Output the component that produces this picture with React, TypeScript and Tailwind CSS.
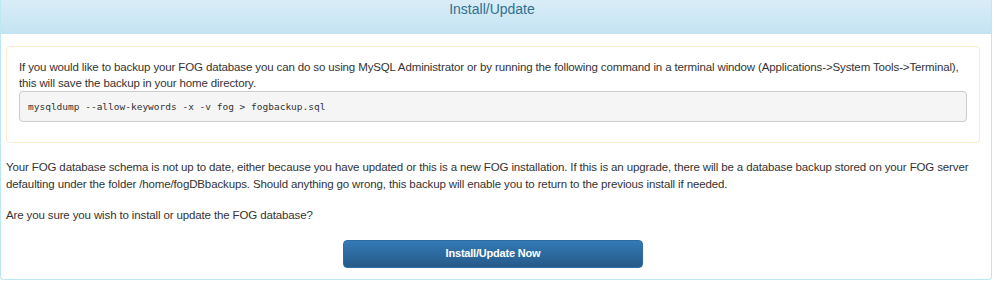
export default function App() {
  return (
    <div className="w-[999px] h-[289px] bg-white font-['Liberation_Sans',Arial,sans-serif] text-[#333]">
      <div className="w-[992px] h-[280px] border border-[#bce8f1] rounded-b-[4px] border-t-0 flex flex-col">
        <div className="h-[34px] bg-gradient-to-b from-[#d9edf7] to-[#c4e3f3] pl-[5px] pr-[13px]">
          <div className="w-full text-center text-[14px] leading-[18px] text-[#31708f]">Install/Update</div>
        </div>
        <div className="pl-[5px] pt-[12px] w-[979px]">
          <div className="border border-[#faebcc] rounded-[4px] pt-[12px] px-[12px] pb-[20px] text-[11.5px] tracking-[-0.13px] leading-[16px]">
            <p>
              If you would like to backup your FOG database you can do so using MySQL Administrator or by running the following command in a terminal window (Applications-&gt;System Tools-&gt;Terminal), this will save the backup in your home directory.
            </p>
            <pre className="mt-0 h-[31px] flex items-center px-[8px] bg-[#f5f5f5] border border-[#ccc] rounded-[4px] font-['DejaVu_Sans_Mono',monospace] text-[9.5px] tracking-normal text-[#333]">
              mysqldump --allow-keywords -x -v fog &gt; fogbackup.sql
            </pre>
          </div>
          <div className="mt-[16px] text-[11.5px] tracking-[-0.13px] leading-[16.5px]">
            <p>
              Your FOG database schema is not up to date, either because you have updated or this is a new FOG installation. If this is an upgrade, there will be a database backup stored on your FOG server defaulting under the folder /home/fogDBbackups. Should anything go wrong, this backup will enable you to return to the previous install if needed.
            </p>
            <p className="mt-[15px]">Are you sure you wish to install or update the FOG database?</p>
          </div>
          <div className="flex justify-center mt-[16px]">
            <button className="w-[300px] h-[28px] rounded-[4px] border border-[#2e6da4] bg-gradient-to-b from-[#337ab7] to-[#265a88] text-white text-[11px] tracking-[-0.2px] font-bold">
              Install/Update Now
            </button>
          </div>
        </div>
      </div>
    </div>
  );
}
